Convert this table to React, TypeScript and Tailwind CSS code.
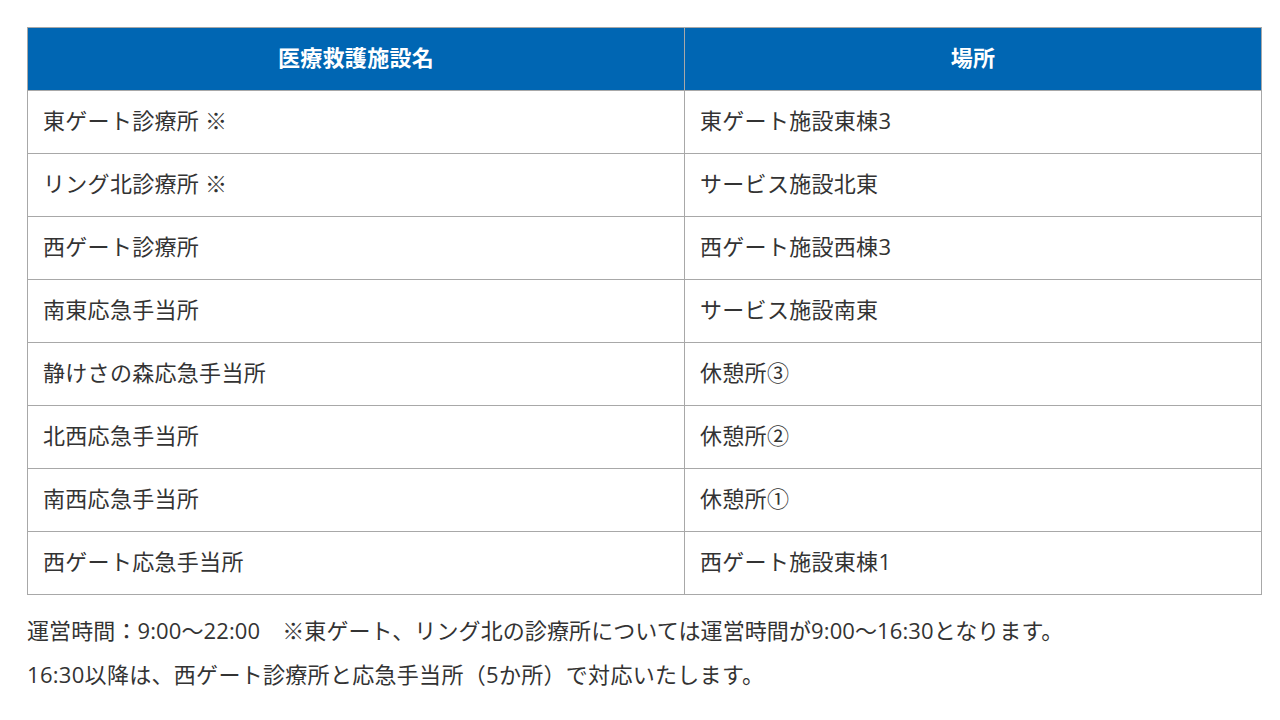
import React from "react";

const rows: [string, string][] = [
  ["東ゲート診療所 ※", "東ゲート施設東棟3"],
  ["リング北診療所 ※", "サービス施設北東"],
  ["西ゲート診療所", "西ゲート施設西棟3"],
  ["南東応急手当所", "サービス施設南東"],
  ["静けさの森応急手当所", "休憩所③"],
  ["北西応急手当所", "休憩所②"],
  ["南西応急手当所", "休憩所①"],
  ["西ゲート応急手当所", "西ゲート施設東棟1"],
];

export default function App() {
  return (
    <div
      className="w-[1280px] h-[720px] bg-white text-[#333333] pt-[27px] pl-[27px] tracking-[0.3px]"
      style={{ fontFamily: '"Open Sans", "Noto Sans CJK JP", sans-serif' }}
    >
      <div className="w-[1235px] grid grid-cols-[657px_577px] border-l border-t border-[#a8a8a8] text-[22px]">
        <div className="h-[63px] pb-[3px] bg-[#0066b3] border-r border-b border-[#a8a8a8] flex items-center justify-center text-white font-bold">
          医療救護施設名
        </div>
        <div className="h-[63px] pb-[3px] bg-[#0066b3] border-r border-b border-[#a8a8a8] flex items-center justify-center text-white font-bold">
          場所
        </div>
        {rows.map(([a, b], i) => (
          <React.Fragment key={i}>
            <div className="h-[63px] pb-[3px] border-r border-b border-[#a8a8a8] flex items-center pl-[15px]">
              {a}
            </div>
            <div className="h-[63px] pb-[3px] border-r border-b border-[#a8a8a8] flex items-center pl-[15px]">
              {b}
            </div>
          </React.Fragment>
        ))}
      </div>
      <div className="mt-[13px] text-[22px] leading-[44px]">
        <p className="tracking-[0.1px]">
          運営時間：9:00〜22:00　※東ゲート、リング北の診療所については運営時間が9:00〜16:30となります。
        </p>
        <p>16:30以降は、西ゲート診療所と応急手当所（5か所）で対応いたします。</p>
      </div>
    </div>
  );
}
